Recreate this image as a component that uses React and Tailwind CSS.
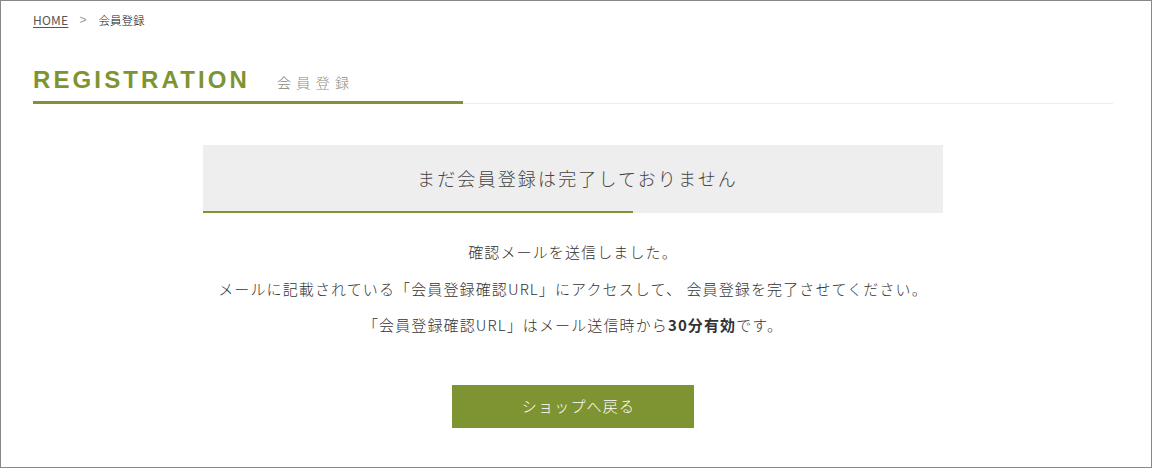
export default function App() {
  const jp = "font-['Noto_Sans_CJK_JP','Noto_Sans',sans-serif]";
  return (
    <div className={`w-[1152px] h-[468px] border border-[#888888] bg-white overflow-hidden ${jp}`}>
      <div className="pl-[32px] pr-[38px]">
        {/* breadcrumb */}
        <div className="pt-[11px] flex items-center text-[12px] leading-[16px]">
          <a href="#" className="text-[#555] underline underline-offset-2 tracking-[0.02em]">HOME</a>
          <span className="ml-[11px] text-[#999] font-['Liberation_Sans',sans-serif]">&gt;</span>
          <span className="ml-[12px] text-[#111] text-[11.5px] font-light">会員登録</span>
        </div>

        {/* title */}
        <div className="mt-[36px]">
          <div className="flex items-baseline h-[32px]">
            <h1 className="font-['Liberation_Sans',sans-serif] font-bold text-[24px] leading-[32px] tracking-[0.13em] text-[#7e9432]">
              REGISTRATION
            </h1>
            <span className="ml-[27px] text-[14px] tracking-[0.38em] text-[#8a8a7a] font-light">会員登録</span>
          </div>
          <div className="mt-[5px] flex items-end">
            <div className="w-[430px] h-[3px] bg-[#7e9432]"></div>
            <div className="flex-1 h-px bg-[#ececec]"></div>
          </div>
        </div>

        {/* notice box */}
        <div className="mt-[41px] mx-auto w-[740px] bg-[#eeeeee]">
          <div className="h-[66px] pl-[9px] flex items-center justify-center text-[18px] tracking-[0.12em] text-[#444] font-light">
            まだ会員登録は完了しておりません
          </div>
          <div className="w-[430px] h-[2px] bg-[#7e9432]"></div>
        </div>

        {/* messages */}
        <div className="mt-[21px] text-center text-[15px] leading-[36.5px] tracking-[0.075em] text-[#333] font-light">
          <p>確認メールを送信しました。</p>
          <p>メールに記載されている「会員登録確認URL」にアクセスして、 会員登録を完了させてください。</p>
          <p>「会員登録確認URL」はメール送信時から<span className="font-bold">30分有効</span>です。</p>
        </div>

        {/* button */}
        <div className="mt-[41px] flex justify-center">
          <button className="w-[242px] h-[43px] pl-[11px] bg-[#7e9432] text-white text-[15px] tracking-[0.08em] font-light">
            ショップへ戻る
          </button>
        </div>
      </div>
    </div>
  );
}
